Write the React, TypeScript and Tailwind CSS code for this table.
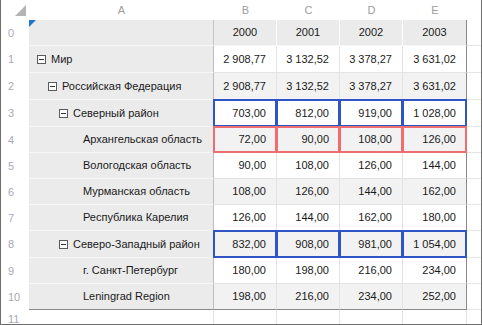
type Row = {
  label: string;
  level: number;
  toggle?: boolean;
  values: string[];
  mark?: "blue" | "red";
};

const rows: Row[] = [
  { label: "Мир", level: 0, toggle: true, values: ["2 908,77", "3 132,52", "3 378,27", "3 631,02"] },
  { label: "Российская Федерация", level: 1, toggle: true, values: ["2 908,77", "3 132,52", "3 378,27", "3 631,02"] },
  { label: "Северный район", level: 2, toggle: true, values: ["703,00", "812,00", "919,00", "1 028,00"], mark: "blue" },
  { label: "Архангельская область", level: 3, values: ["72,00", "90,00", "108,00", "126,00"], mark: "red" },
  { label: "Вологодская область", level: 3, values: ["90,00", "108,00", "126,00", "144,00"] },
  { label: "Мурманская область", level: 3, values: ["108,00", "126,00", "144,00", "162,00"] },
  { label: "Республика Карелия", level: 3, values: ["126,00", "144,00", "162,00", "180,00"] },
  { label: "Северо-Западный район", level: 2, toggle: true, values: ["832,00", "908,00", "981,00", "1 054,00"], mark: "blue" },
  { label: "г. Санкт-Петербург", level: 3, values: ["180,00", "198,00", "216,00", "234,00"] },
  { label: "Leningrad Region", level: 3, values: ["198,00", "216,00", "234,00", "252,00"] },
];

// heights of rows 1..10 (row 0 is the year header)
const heights = ["h-[27px]", "h-[27px]", "h-[27px]", "h-[26px]", "h-[26px]", "h-[26px]", "h-[26px]", "h-[27px]", "h-[26px]", "h-[26px]"];
const indent = ["pl-[8px]", "pl-[19px]", "pl-[30px]", "pl-[54px]"];
const colW = ["w-[63px]", "w-[63px]", "w-[63px]", "w-[64px]"];
const letters = ["B", "C", "D", "E"];

function MinusBox() {
  return (
    <span className="mr-[5px] flex h-[9px] w-[9px] shrink-0 items-center justify-center border border-[#5a5a5a] bg-white">
      <span className="h-px w-[5px] bg-[#333]" />
    </span>
  );
}

function RowNum({ n }: { n: number }) {
  return <div className="w-[28px] shrink-0 pl-[7px] text-[#a8a8b6]">{n}</div>;
}

export default function App() {
  return (
    <div
      className="flex h-[325px] w-[482px] flex-col overflow-hidden border-x border-b border-[#6e6e6e] bg-white text-[11px] text-[#1a1a1a]"
      style={{ fontFamily: '"Liberation Sans", Arial, sans-serif' }}
    >
      {/* column letters */}
      <div className="flex h-[20px] shrink-0 items-center text-[#9c9c9c]">
        <div className="h-full w-[28px] shrink-0 pl-[14px] pt-[5px]">
          <svg width="11" height="11" viewBox="0 0 11 11">
            <polygon points="11,0 11,11 0,11" fill="#b4b4b4" />
          </svg>
        </div>
        <div className="w-[185px] shrink-0 text-center">A</div>
        {letters.map((l, i) => (
          <div key={l} className={`${colW[i]} shrink-0 text-center`}>
            {l}
          </div>
        ))}
        <div className="w-[14px] shrink-0" />
      </div>

      {/* row 0 - years */}
      <div className="flex h-[26px] shrink-0 items-stretch">
        <div className="flex w-[28px] shrink-0 items-center pl-[7px] text-[#a8a8b6]">0</div>
        <div className="relative w-[185px] shrink-0 border-r border-b border-r-[#c4c4c4] border-b-[#f6f6f6] bg-[#ebebeb]">
          <svg className="absolute left-0 top-0" width="7" height="7" viewBox="0 0 7 7">
            <polygon points="0,0 7,0 0,7" fill="#1f74d4" />
          </svg>
        </div>
        {["2000", "2001", "2002", "2003"].map((y, i) => (
          <div
            key={y}
            className={`${colW[i]} flex shrink-0 items-center justify-center border-b border-r border-b-[#f6f6f6] bg-[#ebebeb] ${
              i === 3 ? "border-r-[#8a8a8a]" : "border-r-white"
            }`}
          >
            {y}
          </div>
        ))}
        <div className="w-[14px] shrink-0 border-b border-[#e6e6e6]" />
      </div>

      {rows.map((r, ri) => {
        const last = ri === rows.length - 1;
        const alt = ri % 2 === 1;
        return (
          <div key={ri} className={`flex ${heights[ri]} shrink-0 items-stretch`}>
            <div className="flex w-[28px] shrink-0 items-center pl-[7px] text-[#a8a8b6]">{ri + 1}</div>
            <div
              className={`flex w-[185px] shrink-0 items-center border-r border-b border-r-[#bdbdbd] bg-[#ebebeb] ${indent[r.level]} ${
                last ? "border-b-[#8a8a8a]" : "border-b-[#f6f6f6]"
              }`}
            >
              {r.toggle && <MinusBox />}
              <span className="whitespace-nowrap">{r.label}</span>
            </div>
            {r.values.map((v, i) => (
              <div
                key={i}
                className={`relative ${colW[i]} flex shrink-0 items-center justify-end border-r border-b pr-[10px] ${
                  alt ? "bg-[#f2f2f2]" : "bg-white"
                } ${i === 3 ? "border-r-[#8a8a8a]" : "border-r-[#e3e3e3]"} ${last ? "border-b-[#8a8a8a]" : "border-b-[#e3e3e3]"}`}
              >
                {v}
                {r.mark === "blue" && (
                  <div className="absolute -left-px -top-px -right-px -bottom-px border-2 border-[#2f54c4]" />
                )}
                {r.mark === "red" && (
                  <div className="absolute -left-px -top-px -right-px -bottom-px border-2 border-[#ee6e70]" />
                )}
              </div>
            ))}
            <div className="w-[14px] shrink-0 border-b border-[#e6e6e6]" />
          </div>
        );
      })}

      {/* row 11 */}
      <div className="flex min-h-0 flex-1 items-stretch">
        <div className="flex w-[28px] shrink-0 items-start pl-[7px] pt-px text-[#a8a8b6]">11</div>
        <div className="w-[185px] shrink-0 border-r border-[#e3e3e3]" />
        {colW.map((w, i) => (
          <div key={i} className={`${w} shrink-0 border-r border-[#e3e3e3]`} />
        ))}
        <div className="w-[14px] shrink-0" />
      </div>
    </div>
  );
}
